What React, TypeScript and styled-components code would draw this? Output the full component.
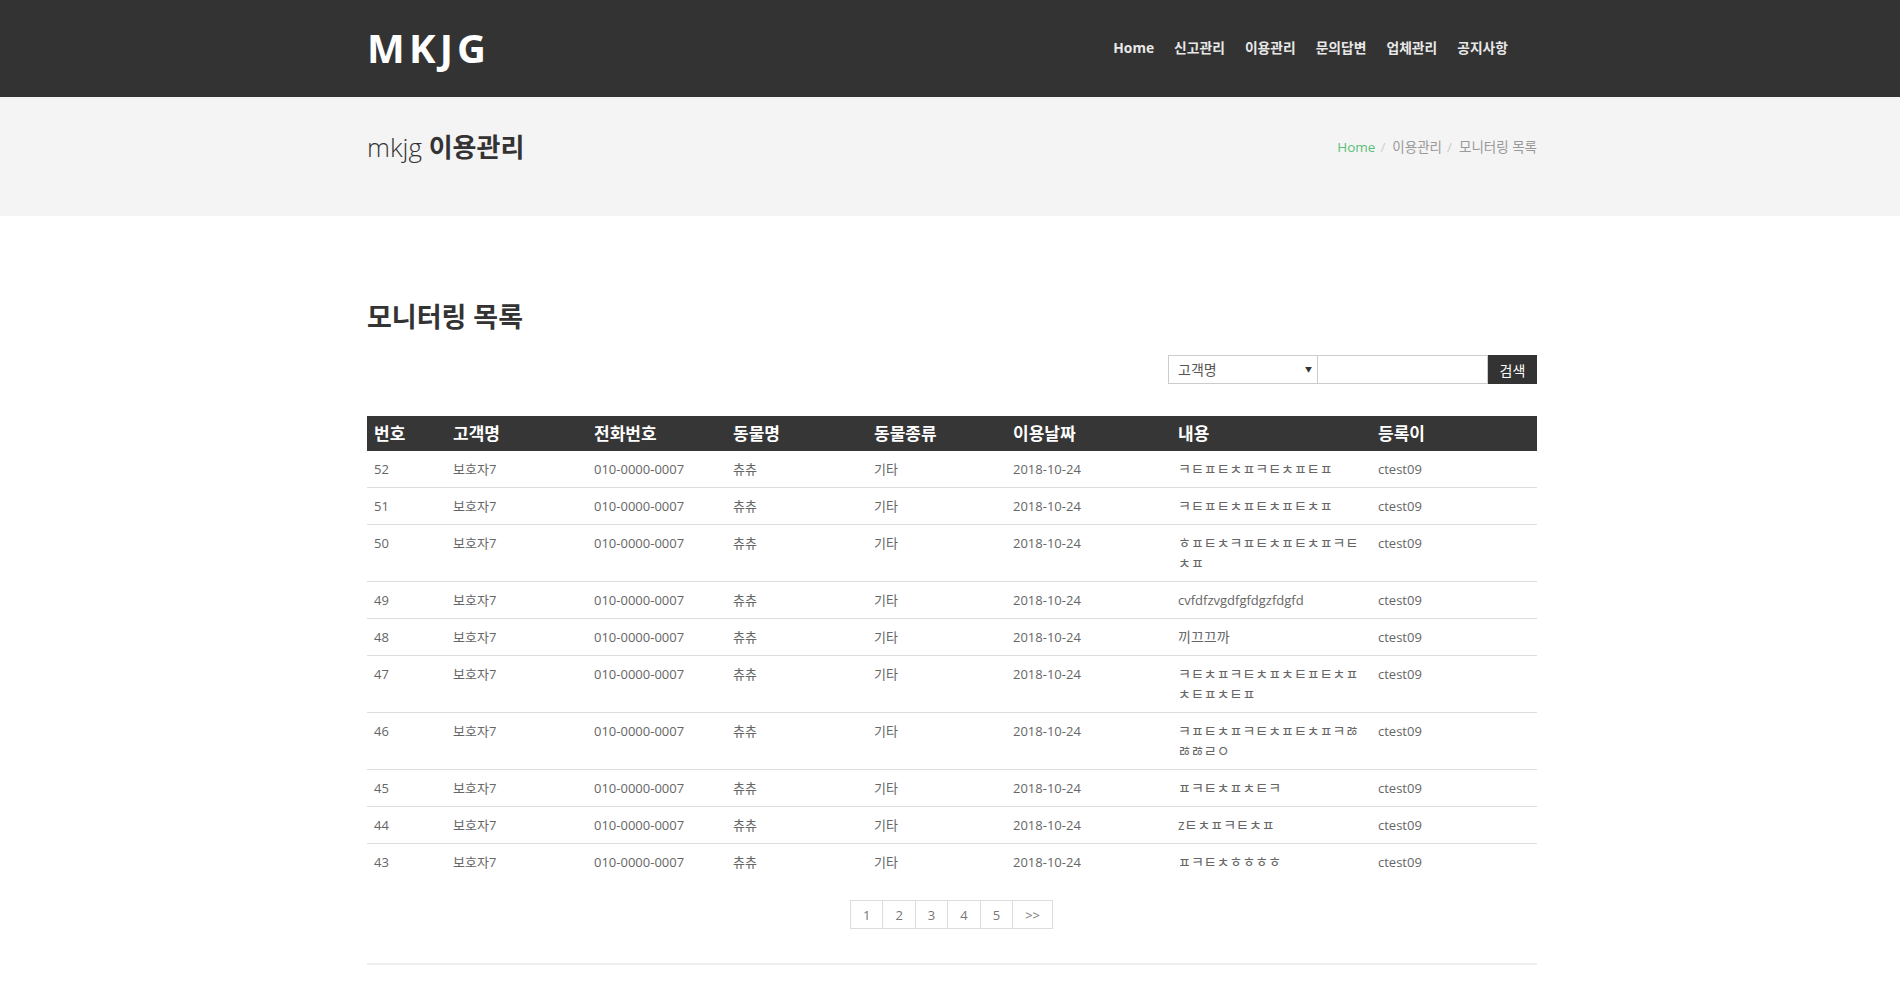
import React from "react";
import styled, { createGlobalStyle } from "styled-components";

const FONT = `"Open Sans", "Noto Sans CJK KR", sans-serif`;

const GlobalStyle = createGlobalStyle`
  html, body { margin: 0; padding: 0; background: #fff; }
  body { font-family: ${FONT}; color: #666; }
  * { box-sizing: border-box; }
`;

const Container = styled.div`
  width: 1170px;
  margin-left: calc(50% - 583px);
`;

const Header = styled.header`
  background: #333;
  height: 97px;
`;

const HeaderInner = styled(Container)`
  height: 100%;
  display: flex;
  align-items: center;
  justify-content: space-between;
`;

const Logo = styled.a`
  font-family: "Open Sans", sans-serif;
  font-size: 40px;
  font-weight: 700;
  letter-spacing: 4.2px;
  color: #fff;
  text-decoration: none;
  line-height: 1;
  margin-top: -1px;
`;

const Nav = styled.ul`
  list-style: none;
  margin: -2px 0 0;
  padding: 0 29px 0 0;
  display: flex;
  gap: 20px;
`;

const NavItem = styled.li`
  font-size: 13.8px;
  font-weight: 700;
  color: #e8e8e8;
  line-height: 20px;
`;

const TitleBand = styled.section`
  background: #f4f4f4;
  height: 119px;
  padding-top: 36px;
`;

const TitleRow = styled(Container)`
  display: flex;
  align-items: center;
  justify-content: space-between;
  height: 28px;
`;

const PageTitle = styled.h1`
  margin: 0;
  font-size: 26px;
  font-weight: 300;
  color: #333;
  line-height: 28px;
  strong { font-weight: 700; }
`;

const Crumbs = styled.ol`
  list-style: none;
  margin: 0;
  padding: 0;
  display: flex;
  font-size: 13.5px;
  color: #999;
  line-height: 20px;
  li + li::before {
    content: "/";
    color: #ccc;
    padding: 0 7px 0 5px;
  }
`;

const Crumb = styled.li<{ $active?: boolean }>`
  color: ${(p) => (p.$active ? "#5cbf7a" : "#999")};
`;

const Main = styled(Container)`
  padding-top: 87px;
`;

const SectionTitle = styled.h2`
  margin: 0;
  font-size: 27px;
  font-weight: 700;
  color: #333;
  line-height: 28px;
`;

const SearchBar = styled.form`
  display: flex;
  justify-content: flex-end;
  margin-top: 24px;
  height: 29px;
`;

const SelectWrap = styled.div`
  position: relative;
  width: 150px;
  height: 29px;
`;

const Select = styled.select`
  appearance: none;
  -webkit-appearance: none;
  width: 100%;
  height: 100%;
  border: 1px solid #ccc;
  background: #fff;
  padding: 0 0 0 9px;
  font-family: ${FONT};
  font-size: 14px;
  color: #555;
  border-radius: 0;
  outline: none;
`;

const Arrow = styled.span`
  position: absolute;
  right: 6px;
  top: 9px;
  font-size: 7px;
  color: #333;
  pointer-events: none;
`;

const SearchInput = styled.input`
  width: 170px;
  height: 29px;
  border: 1px solid #ccc;
  border-left: none;
  outline: none;
  padding: 0 6px;
  font-family: ${FONT};
`;

const SearchButton = styled.button`
  width: 49px;
  height: 29px;
  border: none;
  background: #333;
  color: #fff;
  font-family: ${FONT};
  font-size: 14px;
  padding: 0;
`;

const Table = styled.table`
  width: 100%;
  border-collapse: collapse;
  margin-top: 32px;
  table-layout: fixed;
`;

const Th = styled.th`
  background: #363636;
  color: #fff;
  font-size: 17px;
  font-weight: 700;
  text-align: left;
  height: 35px;
  padding: 0 7px;
  line-height: 20px;
`;

const Tr = styled.tr`
  & + & td { border-top: 1px solid #ddd; }
`;

const Td = styled.td<{ $ko?: boolean }>`
  font-size: ${(p) => (p.$ko ? "14px" : "13px")};
  color: #666;
  line-height: 20px;
  padding: 8px 7px;
  vertical-align: top;
  word-break: break-all;
`;

const Pager = styled.ul`
  list-style: none;
  display: flex;
  justify-content: center;
  margin: 20px 0 0;
  padding: 0;
`;

const PageLink = styled.li`
  height: 29px;
  padding: 0 12px;
  border: 1px solid #ddd;
  margin-left: -1px;
  display: flex;
  align-items: center;
  justify-content: center;
  font-size: 13px;
  color: #777;
`;

const Rule = styled.hr`
  border: none;
  border-top: 2px solid #eee;
  margin: 34px 0 0;
  height: 0;
`;

const colWidths = [79, 141, 139, 141, 139, 165, 200, 166];
const heads = ["번호", "고객명", "전화번호", "동물명", "동물종류", "이용날짜", "내용", "등록이"];

const contents = [
  "ㅋㅌㅍㅌㅊㅍㅋㅌㅊㅍㅌㅍ",
  "ㅋㅌㅍㅌㅊㅍㅌㅊㅍㅌㅊㅍ",
  "ㅎㅍㅌㅊㅋㅍㅌㅊㅍㅌㅊㅍㅋㅌㅊㅍ",
  "cvfdfzvgdfgfdgzfdgfd",
  "끼끄끄까",
  "ㅋㅌㅊㅍㅋㅌㅊㅍㅊㅌㅍㅌㅊㅍㅊㅌㅍㅊㅌㅍ",
  "ㅋㅍㅌㅊㅍㅋㅌㅊㅍㅌㅊㅍㅋㅀㅀㅀㄹㅇ",
  "ㅍㅋㅌㅊㅍㅊㅌㅋ",
  "zㅌㅊㅍㅋㅌㅊㅍ",
  "ㅍㅋㅌㅊㅎㅎㅎㅎ",
];

const hasHangul = (s: string) => /[\u3130-\u318F\uAC00-\uD7AF]/.test(s);

const rows = contents.map((c, i) => ({
  no: 52 - i,
  name: "보호자7",
  phone: "010-0000-0007",
  pet: "츄츄",
  kind: "기타",
  date: "2018-10-24",
  content: c,
  writer: "ctest09",
}));

export default function App() {
  return (
    <>
      <GlobalStyle />
      <Header>
        <HeaderInner>
          <Logo href="#">MKJG</Logo>
          <Nav>
            {["Home", "신고관리", "이용관리", "문의답변", "업체관리", "공지사항"].map((n) => (
              <NavItem key={n}>{n}</NavItem>
            ))}
          </Nav>
        </HeaderInner>
      </Header>
      <TitleBand>
        <TitleRow>
          <PageTitle>
            mkjg <strong>이용관리</strong>
          </PageTitle>
          <Crumbs>
            <Crumb $active>Home</Crumb>
            <Crumb>이용관리</Crumb>
            <Crumb>모니터링 목록</Crumb>
          </Crumbs>
        </TitleRow>
      </TitleBand>
      <Main>
        <SectionTitle>모니터링 목록</SectionTitle>
        <SearchBar onSubmit={(e) => e.preventDefault()}>
          <SelectWrap>
            <Select defaultValue="name">
              <option value="name">고객명</option>
            </Select>
            <Arrow>▼</Arrow>
          </SelectWrap>
          <SearchInput type="text" />
          <SearchButton type="submit">검색</SearchButton>
        </SearchBar>
        <Table>
          <colgroup>
            {colWidths.map((w, i) => (
              <col key={i} style={{ width: w }} />
            ))}
          </colgroup>
          <thead>
            <tr>
              {heads.map((h) => (
                <Th key={h}>{h}</Th>
              ))}
            </tr>
          </thead>
          <tbody>
            {rows.map((r) => (
              <Tr key={r.no}>
                <Td>{r.no}</Td>
                <Td>{r.name}</Td>
                <Td>{r.phone}</Td>
                <Td>{r.pet}</Td>
                <Td>{r.kind}</Td>
                <Td>{r.date}</Td>
                <Td $ko={hasHangul(r.content)}>{r.content}</Td>
                <Td>{r.writer}</Td>
              </Tr>
            ))}
          </tbody>
        </Table>
        <Pager>
          {["1", "2", "3", "4", "5", ">>"].map((p) => (
            <PageLink key={p}>{p}</PageLink>
          ))}
        </Pager>
        <Rule />
      </Main>
    </>
  );
}
